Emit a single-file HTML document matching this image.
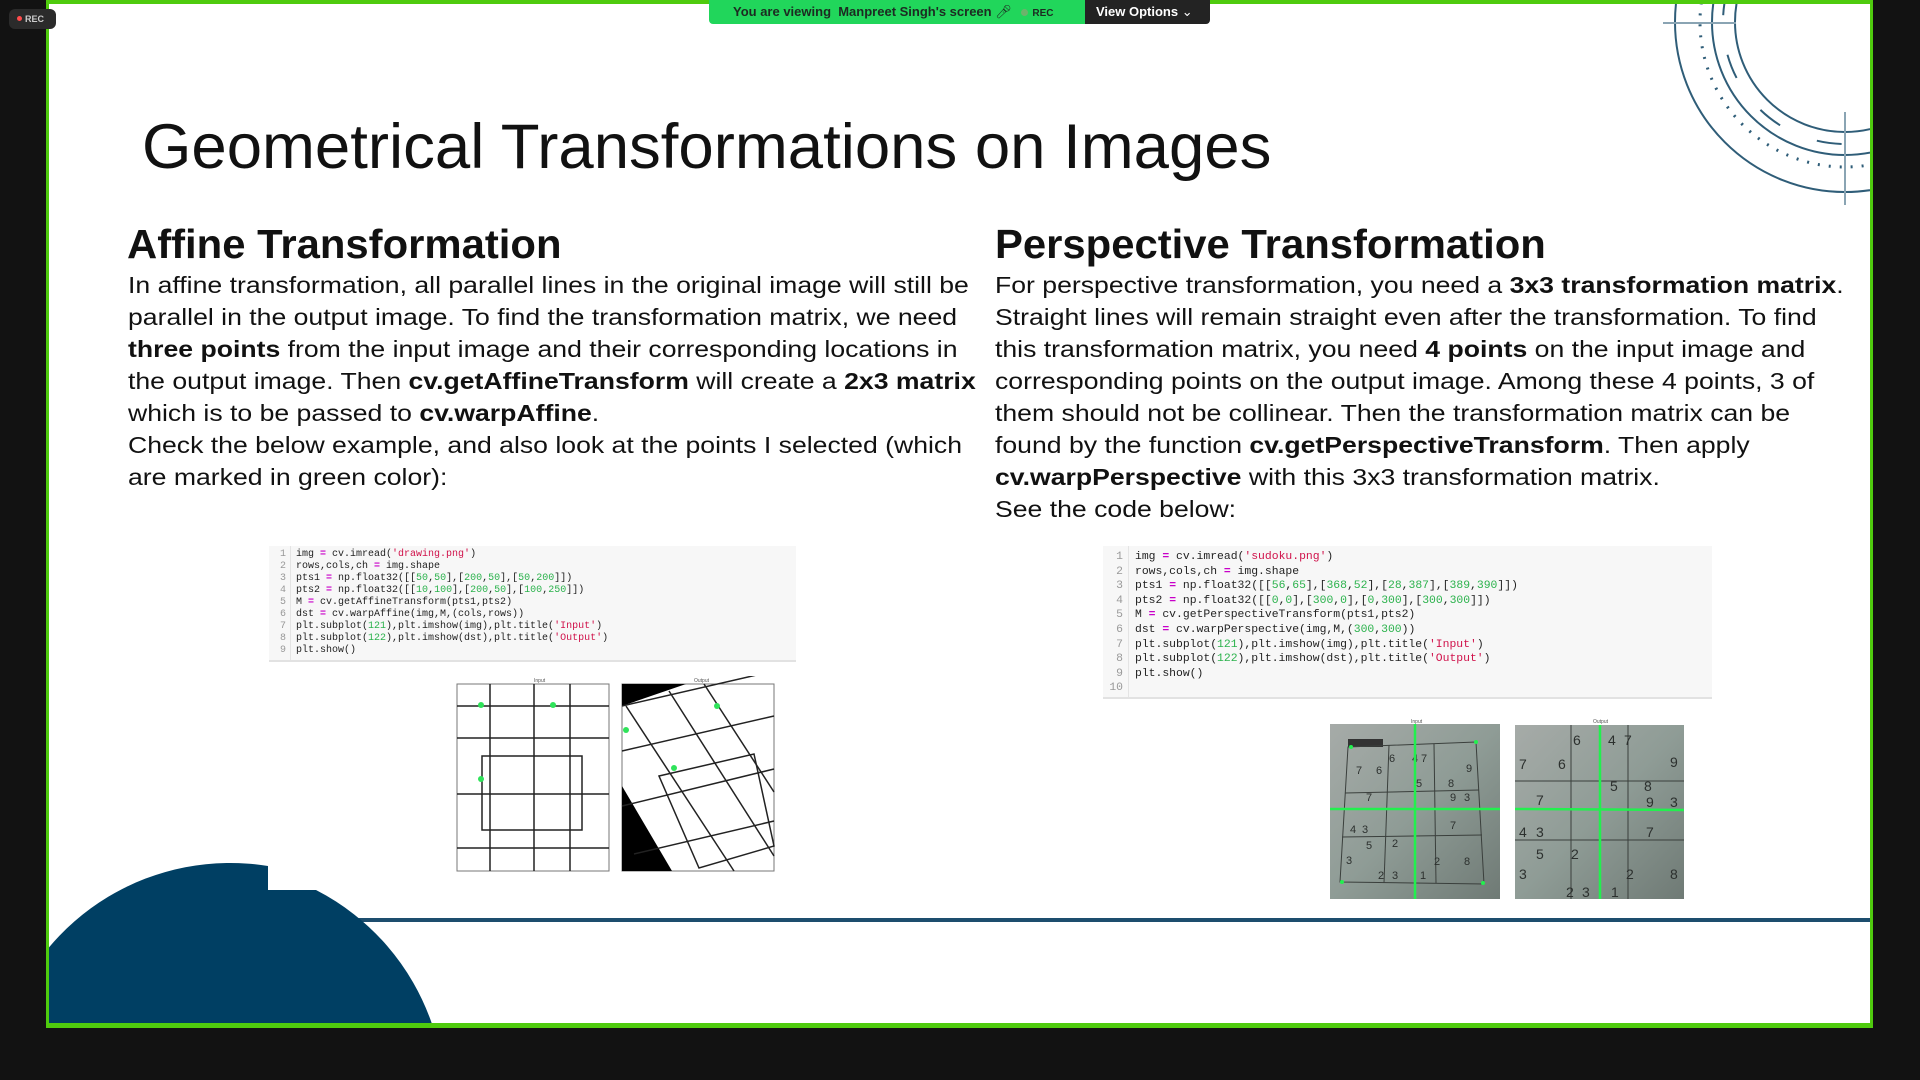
<!DOCTYPE html>
<html><head><meta charset="utf-8"><style>
*{margin:0;padding:0;box-sizing:border-box}
body{width:1920px;height:1080px;background:#121212;position:relative;overflow:hidden;font-family:"Liberation Sans",Arial,sans-serif;color:#111}
#slide{position:absolute;left:46px;top:0;width:1827px;height:1028px;background:#fff;border:3px solid #4fcb0e;border-top-width:4px;border-bottom-width:5px;overflow:hidden}
.abs{position:absolute}
.title{left:93px;top:107px;font-size:63.5px;white-space:nowrap;color:#111}
.h{font-size:41px;font-weight:bold;white-space:nowrap;line-height:48px;transform:scaleX(1.02);transform-origin:0 0}
.body{font-size:23.5px;line-height:32px;white-space:nowrap;transform:scaleX(1.132);transform-origin:0 0}
.body b{font-weight:bold}
.code{background:#f7f7f7;border-bottom:2px solid #e2e2e2;font-family:"Liberation Mono",monospace;color:#222;overflow:hidden}
.code .ln{position:absolute;left:0;top:0;bottom:0;border-right:1px solid #e4e4e4;color:#999;text-align:right}
.code pre{font-family:inherit;position:absolute}
.s{color:#d0114a}.n{color:#2bb24c}.o{color:#c800c8;font-weight:bold}
</style></head><body>
<div id="slide">
  <svg class="abs" style="left:1540px;top:-4px" width="290" height="230" viewBox="1586 0 290 230">
    <g fill="none" stroke="#2f5d78" stroke-width="2">
      <circle cx="1842" cy="22" r="170"/>
      <circle cx="1842" cy="22" r="145" stroke-dasharray="2 9" stroke-width="3"/>
      <circle cx="1842" cy="22" r="133"/>
      <circle cx="1842" cy="22" r="110"/>
      <circle cx="1842" cy="22" r="122" stroke-dasharray="25 40"/>
      <line x1="1660" y1="23" x2="1733" y2="23" stroke="#8aa4b3"/>
      <line x1="1842" y1="112" x2="1842" y2="205" stroke="#8aa4b3"/>
    </g>
  </svg>
  <div class="abs title">Geometrical Transformations on Images</div>
  <div class="abs h" style="left:78px;top:216px">Affine Transformation</div>
  <div class="abs h" style="left:946px;top:216px">Perspective Transformation</div>
  <div class="abs body" style="left:79px;top:265px">
    In affine transformation, all parallel lines in the original image will still be<br>
    parallel in the output image. To find the transformation matrix, we need<br>
    <b>three points</b> from the input image and their corresponding locations in<br>
    the output image. Then <b>cv.getAffineTransform</b> will create a <b>2x3 matrix</b><br>
    which is to be passed to <b>cv.warpAffine</b>.<br>
    Check the below example, and also look at the points I selected (which<br>
    are marked in green color):
  </div>
  <div class="abs body" style="left:946px;top:265px">
    For perspective transformation, you need a <b>3x3 transformation matrix</b>.<br>
    Straight lines will remain straight even after the transformation. To find<br>
    this transformation matrix, you need <b>4 points</b> on the input image and<br>
    corresponding points on the output image. Among these 4 points, 3 of<br>
    them should not be collinear. Then the transformation matrix can be<br>
    found by the function <b>cv.getPerspectiveTransform</b>. Then apply<br>
    <b>cv.warpPerspective</b> with this 3x3 transformation matrix.<br>
    See the code below:
  </div>

  <div class="abs code" style="left:220px;top:542px;width:527px;height:116px;font-size:10px;line-height:12px">
    <div class="ln" style="width:22px;padding:3px 4px 0 0">1<br>2<br>3<br>4<br>5<br>6<br>7<br>8<br>9</div>
    <pre style="left:27px;top:3px">img <span class="o">=</span> cv.imread(<span class="s">'drawing.png'</span>)
rows,cols,ch <span class="o">=</span> img.shape
pts1 <span class="o">=</span> np.float32([[<span class="n">50</span>,<span class="n">50</span>],[<span class="n">200</span>,<span class="n">50</span>],[<span class="n">50</span>,<span class="n">200</span>]])
pts2 <span class="o">=</span> np.float32([[<span class="n">10</span>,<span class="n">100</span>],[<span class="n">200</span>,<span class="n">50</span>],[<span class="n">100</span>,<span class="n">250</span>]])
M <span class="o">=</span> cv.getAffineTransform(pts1,pts2)
dst <span class="o">=</span> cv.warpAffine(img,M,(cols,rows))
plt.subplot(<span class="n">121</span>),plt.imshow(img),plt.title(<span class="s">'Input'</span>)
plt.subplot(<span class="n">122</span>),plt.imshow(dst),plt.title(<span class="s">'Output'</span>)
plt.show()</pre>
  </div>

  <svg class="abs" style="left:405px;top:672px" width="330" height="198">
    <text x="80" y="6" font-size="5" fill="#555" font-family="Liberation Sans">Input</text>
    <text x="240" y="6" font-size="5" fill="#555" font-family="Liberation Sans">Output</text>
    <g stroke="#222" stroke-width="1.5" fill="none">
      <rect x="3" y="8" width="152" height="187" stroke="#777" stroke-width="1"/>
      <line x1="36" y1="8" x2="36" y2="195"/><line x1="80" y1="8" x2="80" y2="195"/><line x1="116" y1="8" x2="116" y2="195"/>
      <line x1="3" y1="30" x2="155" y2="30"/><line x1="3" y1="62" x2="155" y2="62"/><line x1="3" y1="118" x2="155" y2="118"/><line x1="3" y1="172" x2="155" y2="172"/>
      <rect x="28" y="80" width="100" height="74"/>
    </g>
    <g fill="#2fe35a"><circle cx="27" cy="29" r="3"/><circle cx="99" cy="29" r="3"/><circle cx="27" cy="103" r="3"/></g>
    <g>
      <rect x="168" y="8" width="152" height="187" fill="#fff" stroke="#777"/>
      <polygon points="168,8 232,8 168,30" fill="#000"/>
      <polygon points="168,110 218,195 168,195" fill="#000"/>
      <g stroke="#222" stroke-width="1.5" fill="none">
        <line x1="168" y1="30" x2="320" y2="-5"/><line x1="168" y1="75" x2="320" y2="40"/><line x1="168" y1="130" x2="320" y2="93"/><line x1="180" y1="178" x2="320" y2="145"/>
        <line x1="172" y1="30" x2="280" y2="195"/><line x1="215" y1="15" x2="320" y2="180"/><line x1="250" y1="8" x2="320" y2="116"/>
        <polygon points="205,100 300,78 320,170 245,192"/>
      </g>
      <g fill="#2fe35a"><circle cx="263" cy="30" r="3"/><circle cx="172" cy="54" r="3"/><circle cx="220" cy="92" r="3"/></g>
    </g>
  </svg>

  <div class="abs code" style="left:1054px;top:542px;width:609px;height:153px;font-size:11.4px;line-height:14.6px">
    <div class="ln" style="width:26px;padding:4px 5px 0 0">1<br>2<br>3<br>4<br>5<br>6<br>7<br>8<br>9<br>10</div>
    <pre style="left:32px;top:4px">img <span class="o">=</span> cv.imread(<span class="s">'sudoku.png'</span>)
rows,cols,ch <span class="o">=</span> img.shape
pts1 <span class="o">=</span> np.float32([[<span class="n">56</span>,<span class="n">65</span>],[<span class="n">368</span>,<span class="n">52</span>],[<span class="n">28</span>,<span class="n">387</span>],[<span class="n">389</span>,<span class="n">390</span>]])
pts2 <span class="o">=</span> np.float32([[<span class="n">0</span>,<span class="n">0</span>],[<span class="n">300</span>,<span class="n">0</span>],[<span class="n">0</span>,<span class="n">300</span>],[<span class="n">300</span>,<span class="n">300</span>]])
M <span class="o">=</span> cv.getPerspectiveTransform(pts1,pts2)
dst <span class="o">=</span> cv.warpPerspective(img,M,(<span class="n">300</span>,<span class="n">300</span>))
plt.subplot(<span class="n">121</span>),plt.imshow(img),plt.title(<span class="s">'Input'</span>)
plt.subplot(<span class="n">122</span>),plt.imshow(dst),plt.title(<span class="s">'Output'</span>)
plt.show()</pre>
  </div>

  <svg class="abs" style="left:1277px;top:713px" width="370" height="190" font-family="Liberation Sans">
    <defs><linearGradient id="g1" x1="0" y1="0" x2="1" y2="1"><stop offset="0" stop-color="#a6aba8"/><stop offset=".5" stop-color="#8f9c96"/><stop offset="1" stop-color="#6f7a75"/></linearGradient></defs>
    <rect x="4" y="7" width="170" height="175" fill="url(#g1)"/>
    <rect x="22" y="22" width="35" height="8" fill="#333"/>
    <g stroke="#3a3f3c" stroke-width="1" fill="none">
      <polygon points="22,30 150,25 158,167 14,165"/>
      <line x1="63" y1="28" x2="58" y2="166"/><line x1="108" y1="27" x2="110" y2="166"/>
      <line x1="19" y1="76" x2="153" y2="73"/><line x1="16" y1="120" x2="156" y2="118"/>
    </g>
    <g font-size="11" fill="#2c302e"><text x="63" y="45">6</text><text x="86" y="45">4</text><text x="95" y="45">7</text><text x="30" y="57">7</text><text x="50" y="57">6</text><text x="140" y="55">9</text><text x="90" y="70">5</text><text x="122" y="70">8</text><text x="40" y="84">7</text><text x="124" y="84">9</text><text x="138" y="84">3</text><text x="24" y="116">4</text><text x="36" y="116">3</text><text x="124" y="112">7</text><text x="40" y="132">5</text><text x="66" y="130">2</text><text x="20" y="147">3</text><text x="108" y="148">2</text><text x="138" y="148">8</text><text x="52" y="162">2</text><text x="66" y="162">3</text><text x="94" y="162">1</text></g>
    <line x1="89" y1="7" x2="89" y2="182" stroke="#22f04e" stroke-width="2.5"/>
    <line x1="4" y1="92" x2="174" y2="92" stroke="#22f04e" stroke-width="2.5"/>
    <g fill="#22f04e"><circle cx="25" cy="30" r="2"/><circle cx="150" cy="25" r="2"/><circle cx="16" cy="165" r="2"/><circle cx="157" cy="166" r="2"/></g>
    <rect x="189" y="8" width="169" height="174" fill="url(#g1)"/>
    <g stroke="#3a3f3c" stroke-width="1" fill="none">
      <line x1="245" y1="8" x2="245" y2="182"/><line x1="302" y1="8" x2="302" y2="182"/>
      <line x1="189" y1="64" x2="358" y2="64"/><line x1="189" y1="123" x2="358" y2="123"/>
    </g>
    <g font-size="14" fill="#2c302e"><text x="247" y="28">6</text><text x="282" y="28">4</text><text x="298" y="28">7</text><text x="193" y="52">7</text><text x="232" y="52">6</text><text x="344" y="50">9</text><text x="284" y="74">5</text><text x="318" y="74">8</text><text x="210" y="88">7</text><text x="320" y="90">9</text><text x="344" y="90">3</text><text x="193" y="120">4</text><text x="210" y="120">3</text><text x="320" y="120">7</text><text x="210" y="142">5</text><text x="245" y="142">2</text><text x="193" y="162">3</text><text x="300" y="162">2</text><text x="344" y="162">8</text><text x="240" y="180">2</text><text x="256" y="180">3</text><text x="285" y="180">1</text></g>
    <line x1="274" y1="8" x2="274" y2="182" stroke="#22f04e" stroke-width="2.5"/>
    <line x1="189" y1="92" x2="358" y2="93" stroke="#22f04e" stroke-width="2.5"/>
    <text x="85" y="6" font-size="5" fill="#555">Input</text>
    <text x="267" y="6" font-size="5" fill="#555">Output</text>
  </svg>

  <div class="abs" style="left:300px;top:914px;width:1540px;height:4px;background:#1d4d6e"></div>
  <svg class="abs" style="left:-3px;top:0" width="500" height="1020">
    <path d="M -40 1020 A 236.5 236.5 0 0 1 222 862 L 222 886 L 270 886 A 236.5 236.5 0 0 1 386 1020 Z" fill="#003f63"/>
  </svg>
</div>

<div class="abs" style="left:709px;top:0;width:376px;height:24px;background:#21d65b;border-radius:0 0 0 4px;font-size:13px;font-weight:bold;color:#1d2a22;line-height:24px;padding-left:24px;white-space:nowrap">You are viewing&nbsp; Manpreet Singh's screen <span style="font-weight:normal">&#x1F3A4;&#xFE0E;</span> <span style="display:inline-block;width:7px;height:7px;border-radius:50%;background:#6db36b;margin:0 4px 0 6px"></span><span style="font-size:10px">REC</span></div>
<div class="abs" style="left:1085px;top:0;width:125px;height:24px;background:#232323;border-radius:0 0 4px 0;color:#fff;font-size:13px;font-weight:bold;line-height:24px;padding-left:11px;white-space:nowrap">View Options <span style="font-weight:normal">&#8964;</span></div>
<div class="abs" style="left:9px;top:9px;width:47px;height:20px;background:#2b2b2b;border-radius:6px;color:#ccc;font-size:9px;font-weight:bold;line-height:20px;padding-left:8px"><span style="display:inline-block;width:5px;height:5px;border-radius:50%;background:#ff4b4b;margin-right:3px;vertical-align:1px"></span>REC</div>
</body></html>
